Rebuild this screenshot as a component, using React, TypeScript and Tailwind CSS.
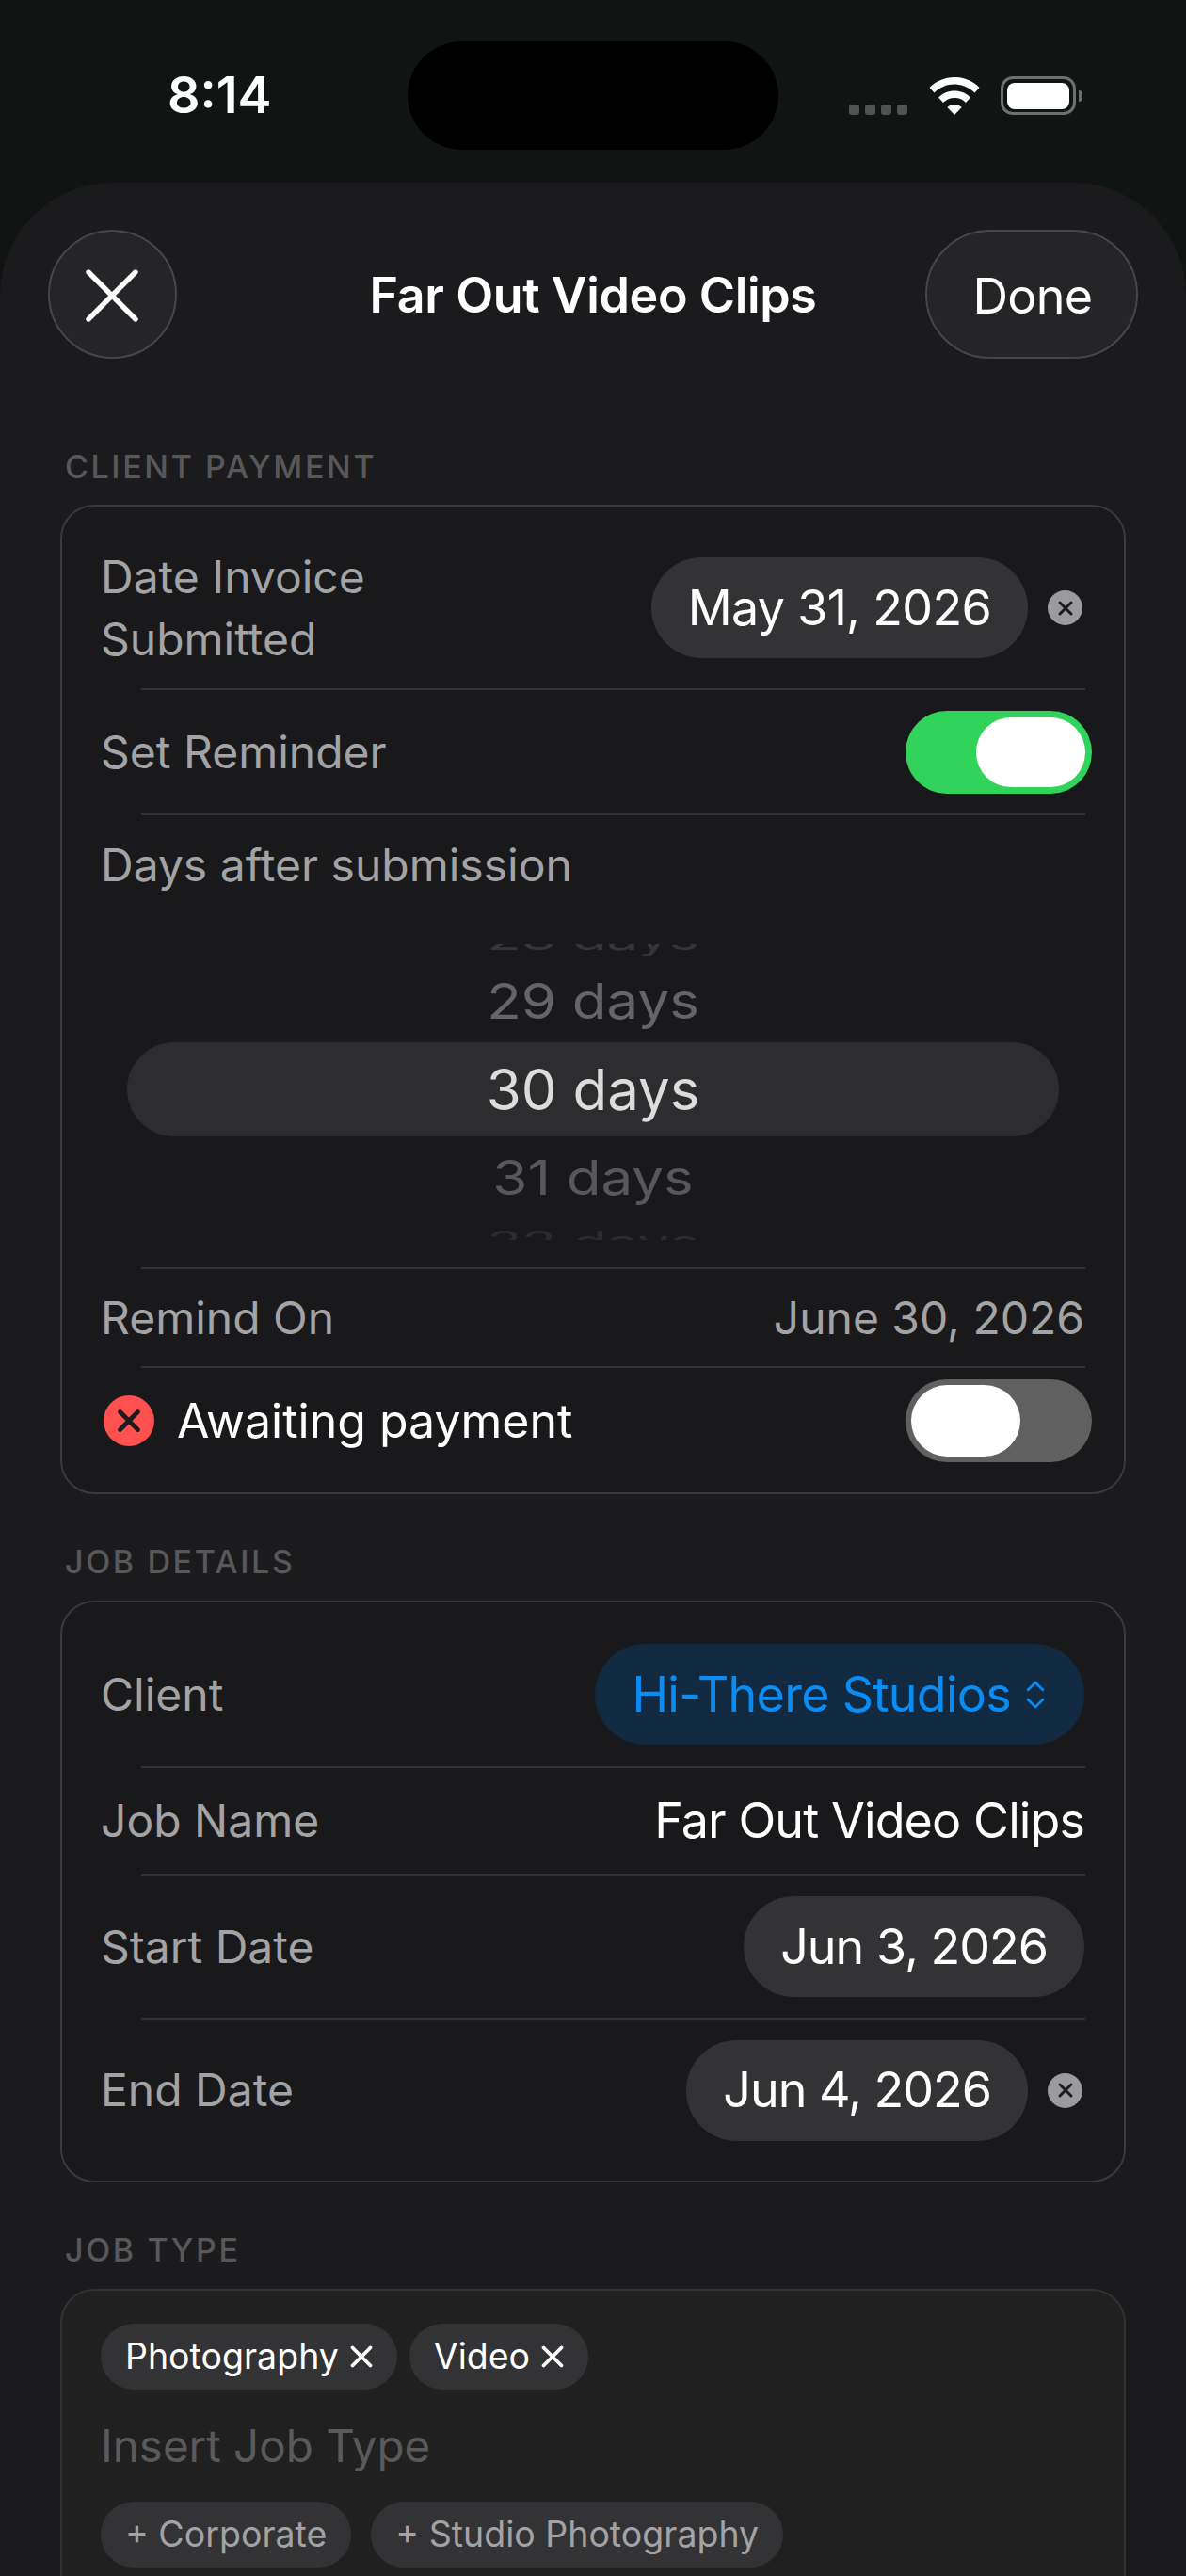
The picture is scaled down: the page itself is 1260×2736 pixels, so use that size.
import { X } from 'lucide-react'

function ClearDot() {
  return (
    <span className="mr-[2px] flex h-[37px] w-[37px] items-center justify-center rounded-full bg-[#9b9b9d]">
      <X className="h-[24px] w-[24px] text-[#1c1c1e]" strokeWidth={3} />
    </span>
  )
}

function DatePill({ children, tight }: { children: React.ReactNode; tight?: boolean }) {
  return (
    <span className={`flex h-[107px] items-center rounded-full bg-[#333335] px-[39px] text-[52px] text-white ${tight ? 'tracking-[-1px]' : 'tracking-[-0.7px]'}`}>
      {children}
    </span>
  )
}

function Row({ label, children, className }: { label: React.ReactNode; children?: React.ReactNode; className: string }) {
  return (
    <div className={`flex items-center justify-between pr-[42px] pl-[41px] ${className}`}>
      <span className="text-[48px] leading-[66px] text-[#a3a3a5]">{label}</span>
      {children}
    </div>
  )
}

function Divider() {
  return <div className="mr-[41px] ml-[84px] h-[2px] bg-[#333335]" />
}

function SectionLabel({ children, className }: { children: React.ReactNode; className: string }) {
  return <div className={`pl-[69px] text-[34px] leading-[40px] font-medium tracking-[2.6px] text-[#58585a] ${className}`}>{children}</div>
}

function Chip({ children, muted }: { children: React.ReactNode; muted?: boolean }) {
  return <span className={`flex h-[70px] items-center rounded-full bg-[#333335] px-[26px] text-[37.5px] ${muted ? 'text-[#a3a3a5]' : 'text-white'}`}>{children}</span>
}

function ChipX() {
  return <X className="-mr-[7px] ml-[5px] h-[38px] w-[38px]" strokeWidth={2.4} />
}

export default function App() {
  return (
    <div className="h-[2736px] w-[1260px] overflow-hidden bg-[#101413] font-['Inter',sans-serif]">
      {/* status bar */}
      <div className="flex h-[194px] items-start justify-between">
        <div className="mt-[71px] ml-[178px] text-[54px] leading-[60px] font-semibold text-white">8:14</div>
        <div className="absolute top-[44px] left-[433px] h-[115px] w-[394px] rounded-full bg-black" />
        <div className="mt-[81px] mr-[110px] flex items-center">
          <div className="mt-[29px] mr-[23px] flex gap-[6px]">
            <span className="h-[11px] w-[11px] rounded-[3px] bg-[#505352]" />
            <span className="h-[11px] w-[11px] rounded-[3px] bg-[#505352]" />
            <span className="h-[11px] w-[11px] rounded-[3px] bg-[#505352]" />
            <span className="h-[11px] w-[11px] rounded-[3px] bg-[#505352]" />
          </div>
          <svg width="54" height="40" viewBox="0 0 54 40" fill="white" className="mr-[22px]">
            <path d="M27 0C16.5 0 7.5 4 0.5 11L5.5 16.5C11 11 18.5 7.6 27 7.6C35.5 7.6 43 11 48.5 16.5L53.5 11C46.5 4 37.5 0 27 0Z" />
            <path d="M27 14.5C20.5 14.5 14.6 17 10 21.5L15 27C18.2 23.9 22.4 22 27 22C31.6 22 35.8 23.9 39 27L44 21.5C39.4 17 33.5 14.5 27 14.5Z" />
            <path d="M27 29C24.2 29 21.4 30 19.4 32L27 40L34.6 32C32.6 30 29.8 29 27 29Z" />
          </svg>
          <div className="flex h-[41px] w-[80px] items-center justify-center rounded-[13px] border-[3px] border-[#6e6f6f]">
            <div className="h-[28px] w-[66px] rounded-[8px] bg-white" />
          </div>
          <div className="ml-[3px] h-[12px] w-[4px] rounded-r-full bg-[#6e6f6f]" />
        </div>
      </div>

      {/* sheet */}
      <div className="h-[2542px] rounded-t-[120px] bg-[#1b1b1d]">
        <div className="grid grid-cols-[1fr_auto_1fr] items-center pt-[50px] pr-[51px] pl-[51px]">
          <div className="flex h-[137px] w-[137px] items-center justify-center rounded-full border-[2px] border-[#47474a] bg-[#252527]">
            <X className="mt-[2px] mr-[2px] h-[100px] w-[100px] text-white" strokeWidth={1.3} />
          </div>
          <div className="mt-[3px] text-[52px] leading-[60px] font-semibold tracking-[-0.4px] text-white">Far Out Video Clips</div>
          <div className="flex h-[137px] w-[226px] items-center justify-center justify-self-end rounded-full border-[2px] border-[#47474a] bg-[#252527] pt-[4px] pl-[2px] text-[52px] tracking-[-0.7px] text-white">Done</div>
        </div>

        <SectionLabel className="mt-[95px]">CLIENT PAYMENT</SectionLabel>
        <div className="mx-[64px] mt-[20px] h-[1051px] rounded-[36px] border-[2px] border-[#3a3a3c] bg-[#19191b]">
          <Row label={<>Date Invoice<br />Submitted</>} className="h-[193px] pt-[22px]">
            <div className="flex items-center gap-[21px]">
              <DatePill>May 31, 2026</DatePill>
              <ClearDot />
            </div>
          </Row>
          <Divider />
          <div className="flex h-[131px] items-center justify-between pr-[34px] pl-[41px]">
            <span className="text-[48px] leading-[66px] text-[#a3a3a5]">Set Reminder</span>
            <div className="flex h-[88px] w-[198px] items-center justify-end rounded-full bg-[#32d35a] pr-[7px]">
              <div className="h-[74px] w-[116px] rounded-full bg-white" />
            </div>
          </div>
          <Divider />
          <div className="h-[480px]">
            <div className="pt-[20px] pl-[41px] text-[48px] leading-[66px] text-[#a3a3a5]">Days after submission</div>
            {/* wheel picker */}
            <div className="mt-[51px] text-center text-[60px]">
              <div className="h-[12px] overflow-hidden">
                <div className="-mt-[12px] h-[12px] scale-y-[0.55] leading-[12px] text-[#363638]">28 days</div>
              </div>
              <div className="mt-[15px] h-[66px] scale-y-[0.87] leading-[66px] text-[#656567]">29 days</div>
              <div className="mx-[69px] mt-[11px] flex h-[100px] items-center justify-center rounded-full bg-[#2d2d2f] text-[#dcdcdc]">30 days</div>
              <div className="mt-[11px] h-[66px] scale-y-[0.84] leading-[66px] text-[#58585a]">31 days</div>
              <div className="mt-[23px] h-[10px] overflow-hidden">
                <div className="mt-[7px] h-[10px] scale-y-[0.55] leading-[10px] text-[#2c2c2e]">32 days</div>
              </div>
            </div>
          </div>
          <Divider />
          <Row label="Remind On" className="h-[103px]">
            <span className="text-[48px] text-[#a3a3a5]">June 30, 2026</span>
          </Row>
          <Divider />
          <div className="flex h-[134px] items-center justify-between pr-[34px] pb-[22px] pl-[44px]">
            <div className="flex items-center gap-[24px]">
              <span className="flex h-[54px] w-[54px] items-center justify-center rounded-full bg-[#ff5050]">
                <X className="h-[38px] w-[38px] text-[#1c1c1e]" strokeWidth={3} />
              </span>
              <span className="text-[50px] text-white">Awaiting payment</span>
            </div>
            <div className="flex h-[88px] w-[198px] items-center rounded-full bg-[#606060] pl-[6px]">
              <div className="h-[76px] w-[116px] rounded-full bg-white" />
            </div>
          </div>
        </div>

        <SectionLabel className="mt-[52px]">JOB DETAILS</SectionLabel>
        <div className="mx-[64px] mt-[21px] h-[618px] rounded-[36px] border-[2px] border-[#3a3a3c] bg-[#19191b]">
          <Row label="Client" className="h-[174px] pt-[21px]">
            <span className="flex h-[107px] items-center gap-[15px] rounded-full bg-[#112a41] pr-[41px] pl-[39px] text-[52px] tracking-[-0.7px] text-[#0a8cf5]">
              Hi-There Studios
              <svg width="22" height="32" viewBox="0 0 22 32" fill="none" stroke="currentColor" strokeWidth="2.6" strokeLinecap="round" strokeLinejoin="round">
                <path d="M3 11L11 3L19 11" />
                <path d="M3 21L11 29L19 21" />
              </svg>
            </span>
          </Row>
          <Divider />
          <Row label="Job Name" className="h-[112px]">
            <span className="text-[52px] tracking-[-0.9px] text-white">Far Out Video Clips</span>
          </Row>
          <Divider />
          <Row label="Start Date" className="h-[151px]">
            <DatePill tight>Jun 3, 2026</DatePill>
          </Row>
          <Divider />
          <Row label="End Date" className="h-[150px]">
            <div className="flex items-center gap-[21px]">
              <DatePill tight>Jun 4, 2026</DatePill>
              <ClearDot />
            </div>
          </Row>
        </div>

        <SectionLabel className="mt-[52px]">JOB TYPE</SectionLabel>
        <div className="mx-[64px] mt-[21px] h-[400px] rounded-t-[36px] border-[2px] border-[#323234] bg-[#202021] pt-[35px] pl-[41px]">
          <div className="flex gap-[13px]">
            <Chip>Photography<ChipX /></Chip>
            <Chip>Video<ChipX /></Chip>
          </div>
          <div className="mt-[27px] text-[47.5px] leading-[66px] text-[#5a5a5c]">Insert Job Type</div>
          <div className="mt-[26px] flex gap-[21px]">
            <Chip muted>+ Corporate</Chip>
            <Chip muted>+ Studio Photography</Chip>
          </div>
        </div>
      </div>
    </div>
  )
}
